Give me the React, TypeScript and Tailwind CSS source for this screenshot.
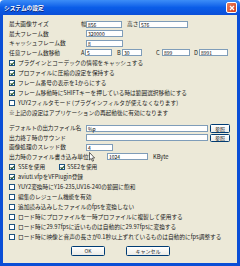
import React from 'react';

/* ---------- Bausteine ---------- */

function Box({ w, value, className = '' }: { w: string; value?: string; className?: string }) {
  return (
    <div
      className={
        'h-[7px] shrink-0 border border-[#7F9DB9] bg-white pl-[1px] text-[5px] leading-[5px] text-black ' +
        w +
        ' ' +
        className
      }
    >
      {value}
    </div>
  );
}

function Check({ checked }: { checked: boolean }) {
  return (
    <div className="grid h-[6px] w-[6px] shrink-0 place-items-center border border-[#1C5180] bg-white">
      {checked && (
        <svg width="5" height="5" viewBox="0 0 5 5" aria-hidden="true">
          <path d="M0.6 2.4 L1.9 3.7 L4.4 1" fill="none" stroke="#1c4a1c" strokeWidth="1.1" />
        </svg>
      )}
    </div>
  );
}

function CheckRow({ checked, label }: { checked: boolean; label: string }) {
  return (
    <div className="flex h-[10px] items-center">
      <Check checked={checked} />
      <span className="ml-[3px] whitespace-nowrap">{label}</span>
    </div>
  );
}

function Btn({ label, w, h = 'h-[10px]' }: { label: string; w: string; h?: string }) {
  return (
    <div
      className={
        'grid shrink-0 place-items-center rounded-[1.5px] border border-[#003C74] bg-gradient-to-b from-white to-[#ECEBE6] text-[5px] leading-none ' +
        w +
        ' ' +
        h
      }
    >
      {label}
    </div>
  );
}

/* ---------- Haupt-Komponente ---------- */

export default function App() {
  return (
    <div
      className="relative flex h-[266px] w-[240px] flex-col overflow-hidden text-[5.7px] leading-none text-[#222]"
      style={{ fontFamily: "'Noto Sans CJK JP', 'Liberation Sans', sans-serif" }}
    >
      {/* Titelleiste */}
      <div className="flex h-[15px] shrink-0 items-center justify-between rounded-t-[4px] bg-gradient-to-b from-[#3C8DF7] via-[#0A5DE8] to-[#0B4FD8] pl-[4px] pr-[3px]">
        <span className="font-bold text-white [text-shadow:0.5px_0.5px_0_#0A1E6E]">システムの設定</span>
        <div className="grid h-[11px] w-[11px] place-items-center rounded-[2px] border border-white bg-gradient-to-br from-[#E9815E] to-[#D23A12]">
          <svg width="6" height="6" viewBox="0 0 6 6" aria-hidden="true">
            <path d="M1 1 L5 5 M5 1 L1 5" stroke="white" strokeWidth="1.3" />
          </svg>
        </div>
      </div>

      {/* Fensterrahmen + Inhalt */}
      <div className="flex flex-1 flex-col border-x-[3px] border-b-[3px] border-[#0A4ED6] bg-[#ECE9D8] pl-[6px] pt-[4.5px]">
        {/* Zahlenfelder */}
        <div className="flex h-[9.5px] items-center">
          <span className="w-[72px] shrink-0">最大画像サイズ</span>
          <span className="w-[5px] shrink-0">幅</span>
          <Box w="w-[36px]" value="856" />
          <span className="ml-[5px] w-[12px] shrink-0 whitespace-nowrap">高さ</span>
          <Box w="w-[49px]" value="576" />
        </div>
        <div className="flex h-[9.5px] items-center">
          <span className="w-[77px] shrink-0">最大フレーム数</span>
          <Box w="w-[37px]" value="320000" />
        </div>
        <div className="flex h-[9.5px] items-center">
          <span className="w-[77px] shrink-0">キャッシュフレーム数</span>
          <Box w="w-[37px]" value="8" />
        </div>
        <div className="flex h-[9.5px] items-center">
          <span className="w-[72px] shrink-0">任意フレーム数移動</span>
          <span className="w-[4px] shrink-0">A</span>
          <Box w="w-[27px]" value="5" />
          <span className="ml-[5px] w-[5px] shrink-0">B</span>
          <Box w="w-[20px]" value="30" />
          <span className="ml-[14px] w-[6px] shrink-0">C</span>
          <Box w="w-[28px]" value="899" />
          <span className="ml-[4px] w-[5px] shrink-0">D</span>
          <Box w="w-[29px]" value="8991" />
        </div>

        {/* Optionen (Neustart nötig) */}
        <div className="flex flex-col">
          <CheckRow checked label="プラグインとコーデックの情報をキャッシュする" />
          <CheckRow checked label="プロファイルに圧縮の設定を保持する" />
          <CheckRow checked label="フレーム番号の表示を1からにする" />
          <CheckRow checked label="フレーム移動時にSHIFTキーを押している時は範囲選択移動にする" />
          <CheckRow checked={false} label="YUY2フィルタモード (プラグインフィルタが使えなくなります)" />
          <div className="flex h-[10px] items-center whitespace-nowrap">
            ※上記の設定はアプリケーションの再起動後に有効になります
          </div>
        </div>

        {/* Ausgabe */}
        <div className="mt-[6px] flex flex-col">
          <div className="flex h-[9.5px] items-center">
            <span className="w-[77px] shrink-0 whitespace-nowrap tracking-[-0.15px]">デフォルトの出力ファイル名</span>
            <Box w="w-[122px]" value="%p" />
            <Btn label="参照" w="w-[20px] ml-[2px]" h="h-[8.5px]" />
          </div>
          <div className="flex h-[9.5px] items-center">
            <span className="w-[77px] shrink-0">出力終了時のサウンド</span>
            <Box w="w-[122px]" />
            <Btn label="参照" w="w-[20px] ml-[2px]" h="h-[8.5px]" />
          </div>
          <div className="flex h-[9.5px] items-center">
            <span className="w-[77px] shrink-0">画像処理のスレッド数</span>
            <Box w="w-[27px]" value="4" />
          </div>
          <div className="flex h-[9.5px] items-center">
            <span className="w-[98px] shrink-0 whitespace-nowrap">出力時のファイル書き込み単位</span>
            <Box w="w-[41px]" value="1024" />
            <span className="ml-[5px]">KByte</span>
          </div>
        </div>

        {/* Weitere Optionen */}
        <div className="flex flex-col">
          <div className="flex h-[10px] items-center">
            <Check checked />
            <span className="ml-[3px] w-[41px] shrink-0">SSEを使用</span>
            <Check checked />
            <span className="ml-[2px]">SSE2を使用</span>
          </div>
          <CheckRow checked label="aviutl.vfpをVFPlugin登録" />
          <CheckRow checked={false} label="YUY2変換時にY16-235,UV16-240の範囲に飽和" />
          <CheckRow checked={false} label="編集のレジューム機能を有効" />
          <CheckRow checked={false} label="追加読み込みしたファイルのfpsを変換しない" />
          <CheckRow checked={false} label="ロード時にプロファイルを一時プロファイルに複製して使用する" />
          <CheckRow checked={false} label="ロード時に29.97fpsに近いものは自動的に29.97fpsに変換する" />
          <CheckRow checked={false} label="ロード時に映像と音声の長さが0.1秒以上ずれているものは自動的にfps調整する" />
        </div>

        {/* Knöpfe */}
        <div className="mt-[4px] flex pl-[62px]">
          <Btn label="OK" w="w-[34px]" />
          <Btn label="キャンセル" w="w-[44px] ml-[21px]" />
        </div>
      </div>

      {/* Mauszeiger */}
      <svg
        className="absolute left-[89px] top-[152px]"
        width="6"
        height="10"
        viewBox="0 0 6 10"
        aria-hidden="true"
      >
        <path d="M0.5 0.5 L0.5 8 L2.2 6.4 L3.4 9.2 L4.6 8.7 L3.4 6 L5.6 6 Z" fill="white" stroke="black" strokeWidth="0.6" />
      </svg>
    </div>
  );
}
